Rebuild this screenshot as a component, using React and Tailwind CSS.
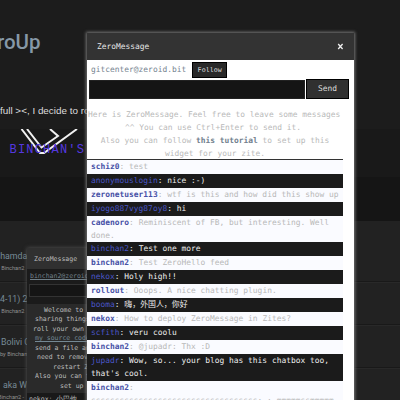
import React from "react";

const messages = [
  ["schiz0", "test", "h-[14px]"],
  ["anonymouslogin", "nice :-)", "h-[14px]"],
  ["zeronetuser113", "wtf is this and how did this show up", "h-[14px]"],
  ["iyogo887vyg87oy8", "hi", "h-[14px]"],
  ["cadenoro", "Reminiscent of FB, but interesting. Well done.", "h-[26px]"],
  ["binchan2", "Test one more", "h-[14px]"],
  ["binchan2", "Test ZeroHello feed", "h-[14px]"],
  ["nekox", "Holy high!!", "h-[14px]"],
  ["rollout", "Ooops. A nice chatting plugin.", "h-[14px]"],
  ["booma", "嗨，外国人，你好", "h-[14px]"],
  ["nekox", "How to deploy ZeroMessage in Zites?", "h-[14px]"],
  ["scfith", "veru coolu", "h-[14px]"],
  ["binchan2", "@jupadr: Thx :D", "h-[14px]"],
  ["jupadr", "Wow, so... your blog has this chatbox too, that's cool.", "h-[27px]"],
  ["binchan2", "sssssssssssssssssssssssssssssssssss:.:.mmmmmssmmmmm", "h-[32px]"],
];

const darkRows = [1, 3, 5, 7, 9, 11, 13];

const posts = [
  ["Shamda", "by Binchan2", "-ml-[5px]", "-ml-[6px]"],
  ["4-11) 2", "by Binchan2", "ml-0", "-ml-[6px]"],
  ["Bolivi C", "by Binchan2", "ml-px", "ml-0"],
  ["aka W", "Binchan2 - ", "ml-[3px]", "-ml-[2px]"],
];

const welcome = [
  ["Welcome to", "pl-[17px]"],
  ["sharing things", "pl-[8px]"],
  ["roll your own z", "pl-[6px]"],
  ["my source code", "pl-[8px]"],
  ["send a file an", "pl-[8px]"],
  ["need to remove", "pl-[10px]"],
  ["restart Z", "pl-[26px]"],
  ["Also you can f", "pl-[8px]"],
  ["set up", "pl-[33px]"],
];

function Message({ name, text, size, dark }) {
  return (
    <div className={`${size} shrink-0 overflow-hidden pl-1 leading-[13px] ${dark ? "bg-[#1b1b1b] text-[#eeeeee]" : "bg-[#fafbff] text-[#b8b8b8]"}`}>
      <span className={dark ? "text-[#4a56c8]" : "font-semibold text-[#4650a6]"}>{name}</span>: {text}
    </div>
  );
}

export default function App() {
  return (
    <div className="relative h-[400px] w-[400px] overflow-hidden bg-[#1c1c1c] font-['Roboto','Liberation_Sans',sans-serif]">
      <main className="flex h-full flex-col whitespace-nowrap">
        <h1 className="h-[102px] -ml-[3px] shrink-0 pt-[29px] text-[20.5px] font-medium leading-[26px] text-[#8698a7]">roUp</h1>
        <p className="h-[27px] shrink-0 font-['Liberation_Sans',sans-serif] text-[9.9px] leading-[18px] text-[#dddddd]">full &gt;&lt;, I decide to ro</p>
        <div className="relative h-[48px] shrink-0 bg-[#191919]">
          <svg className="block" width="100" height="36" viewBox="0 0 100 36" fill="none" stroke="#f1f1f1" strokeWidth="2">
            <path d="M21.5 0 40 24H44L77 0M27 0 41.5 18.5 58 7 50 0" />
          </svg>
          <div className="absolute left-[9.5px] top-[14px] font-['Liberation_Mono',monospace] text-[12px] font-medium leading-[15px] tracking-[1.2px] text-[#5538e0]">BINCHAN'S</div>
        </div>
        <div className="h-[44px] shrink-0 bg-[#151515]" />
        <div className="min-h-0 flex-1 bg-[#222222] pt-[18px]">
          {posts.map(([title, by, offset, byOffset]) => (
            <div key={title} className="h-[43px] border-b border-[#191919] pt-[10px] shadow-[0_1px_0_#292929]">
              <div className={`${offset} text-[8.8px] leading-[14px] text-[#778b97]`}>{title}</div>
              <div className={`${byOffset} text-[5.6px] leading-[10px] text-[#929292]`}>{by}</div>
            </div>
          ))}
        </div>
      </main>

      <aside className="absolute left-[27px] top-[248px] flex h-[160px] w-[100px] flex-col whitespace-nowrap bg-[#2a2a2a] font-['DejaVu_Sans_Mono','Liberation_Mono',monospace] text-[6.5px] text-[#bcbcbc] shadow-[0_0_4px_#555555]">
        <div className="h-[21px] shrink-0 bg-[#303030] pl-[7px] pt-[5px] leading-[12px]">ZeroMessage</div>
        <div className="h-[35px] shrink-0 bg-[#1b1b1b] pt-[2px]">
          <div className="h-[13px] pl-[3px] leading-[11px] text-[#718089] underline">binchan2@zeroid</div>
          <div className="ml-[2px] h-[13px] border border-[#333333] bg-[#151515]" />
        </div>
        <div className="mt-[2px] leading-[9.45px]">
          {welcome.map(([line, indent], i) => (
            <div key={line} className={`${indent} ${i === 3 ? "text-[#748894] underline" : ""}`}>{line}</div>
          ))}
        </div>
        <div className="mt-[2px] bg-[#191919] pl-[2px] leading-[12px]">nekox: 小巴他</div>
      </aside>

      <section className="absolute left-[87px] top-[33px] flex h-[370px] w-[267px] flex-col bg-white font-['DejaVu_Sans_Mono','Liberation_Mono','Noto_Sans_CJK_SC',monospace] text-[7.92px] text-[#b9b9b9] shadow-[0_0_3px_1px_#777777]">
        <header className="flex h-[27px] shrink-0 items-center justify-between bg-[#333333] pl-[10px] pr-[10px] text-[#e7e7e7]">
          <span>ZeroMessage</span>
          <svg width="7" height="7" viewBox="0 0 7 7" stroke="#eeeeee" strokeWidth="1.3"><path d="m1.2 1 4.4 5M5.6 1 1.2 6" /></svg>
        </header>
        <div className="flex h-[20px] shrink-0 items-start pl-1">
          <span className="pt-1 leading-[12px] text-[#75838f]">gitcenter@zeroid.bit</span>
          <button className="ml-[6px] mt-[2px] h-[16px] w-[35px] border border-black bg-[#292929] text-[6.7px] leading-[13px] text-[#dddddd]">Follow</button>
        </div>
        <div className="flex h-[20px] shrink-0 gap-px pl-[2px]">
          <div className="h-[19px] w-[216px] border border-[#222222] bg-[#151515]" />
          <button className="-mt-px h-[20px] w-[43px] border border-black bg-[#303030] text-[#dddddd]">Send</button>
        </div>
        <div className="h-[60px] w-[256px] shrink-0 whitespace-nowrap border-b border-[#333333] pt-[8px] text-center leading-[13px]">
          <div className="pl-px text-left">Here is ZeroMessage. Feel free to leave some messages</div>
          <div className="-ml-[4px]">^^ You can use Ctrl+Enter to send it.</div>
          <div>Also you can follow <span className="font-semibold text-[#71808d]">this tutorial</span> to set up this</div>
          <div>widget for your zite.</div>
        </div>
        <div className="flex w-[256px] flex-col">
          {messages.map(([name, text, size], i) => <Message key={i} name={name} text={text} size={size} dark={darkRows.includes(i)} />)}
        </div>
      </section>
    </div>
  );
}
